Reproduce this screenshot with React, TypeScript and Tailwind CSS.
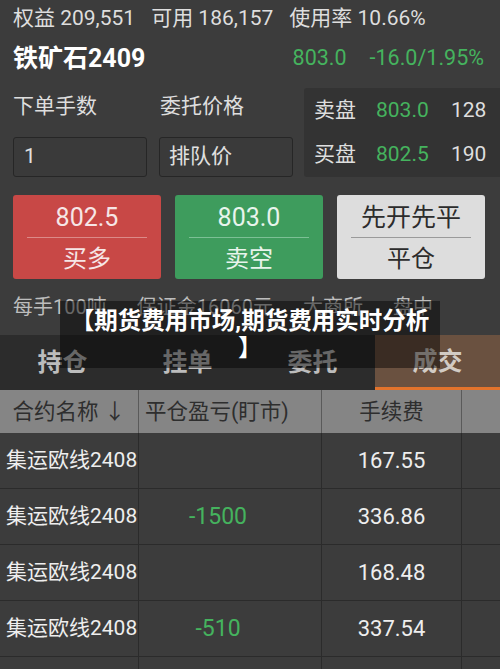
const rows = [
  { name: '集运欧线2408', pnl: '', fee: '167.55' },
  { name: '集运欧线2408', pnl: '-1500', fee: '336.86' },
  { name: '集运欧线2408', pnl: '', fee: '168.48' },
  { name: '集运欧线2408', pnl: '-510', fee: '337.54' },
  { name: '', pnl: '', fee: '' },
];

const tabs = ['持仓', '挂单', '委托', '成交'];

function TradeButton({ top, bottom, className, lineClass }: { top: string; bottom: string; className: string; lineClass: string }) {
  return (
    <div className={`flex flex-col rounded-[3px] h-[84px] ${className}`}>
      <div className="h-[42px] flex items-center justify-center text-[25px] leading-none pt-[2px]">{top}</div>
      <div className={`mx-[14px] h-px ${lineClass}`} />
      <div className="flex-1 flex items-center justify-center text-[24px] leading-none">{bottom}</div>
    </div>
  );
}

export default function App() {
  return (
    <div
      className="relative w-[500px] h-[669px] overflow-hidden bg-[#3c3c3c] text-[#dedede]"
      style={{ fontFamily: 'Roboto, "Noto Sans CJK SC", sans-serif' }}
    >
      {/* 账户概况 */}
      <div className="h-[36px] px-[13px] flex items-center gap-[16px] text-[21px] leading-none whitespace-nowrap">
        <span>权益 209,551</span>
        <span>可用 186,157</span>
        <span>使用率 10.66%</span>
      </div>
      <div className="h-[44px] px-[13px] flex items-center whitespace-nowrap">
        <span className="text-[25px] font-bold text-white leading-none">铁矿石2409</span>
        <span className="ml-auto text-[21.5px] text-[#45b35e] leading-none">803.0</span>
        <span className="ml-[23px] mr-[3px] text-[21.5px] text-[#45b35e] leading-none">-16.0/1.95%</span>
      </div>

      {/* 下单 + 盘口 */}
      <div className="mt-[8px] flex">
        <div className="flex-1 pl-[13px]">
          <div className="h-[37px] flex items-center text-[21px] leading-none">
            <span className="w-[147px]">下单手数</span>
            <span>委托价格</span>
          </div>
          <div className="mt-[12px] flex gap-[12px]">
            <div className="w-[134px] h-[40px] rounded-[3px] border border-[#262626] bg-[#3a3a3a] flex items-center pl-[10px] text-[21px] text-[#e0e0e0]">1</div>
            <div className="w-[134px] h-[40px] rounded-[3px] border border-[#262626] bg-[#3a3a3a] flex items-center pl-[9px] text-[21px] text-[#e0e0e0]">排队价</div>
          </div>
        </div>
        <div className="w-[196px] h-[89px] rounded-l-[3px] bg-[#333333] flex flex-col text-[21px] leading-none">
          <div className="h-[44px] flex items-center pl-[10px]">
            <span className="w-[62px]">卖盘</span>
            <span className="w-[75px] text-[#45b35e]">803.0</span>
            <span>128</span>
          </div>
          <div className="flex-1 flex items-center pl-[10px]">
            <span className="w-[62px]">买盘</span>
            <span className="w-[75px] text-[#45b35e]">802.5</span>
            <span>190</span>
          </div>
        </div>
      </div>

      {/* 操作按钮 */}
      <div className="mt-[18px] px-[13px] grid grid-cols-3 gap-[14px] pr-[15px]">
        <TradeButton top="802.5" bottom="买多" className="bg-[#c84846] text-[#f6e6e6]" lineClass="bg-[#dc8a88]" />
        <TradeButton top="803.0" bottom="卖空" className="bg-[#3e9c5d] text-[#e8f4ec]" lineClass="bg-[#7cc095]" />
        <TradeButton top="先开先平" bottom="平仓" className="bg-[#dddddd] text-[#2c2c2c]" lineClass="bg-[#9a9a9a]" />
      </div>

      {/* 合约信息 */}
      <div className="h-[56px] px-[13px] flex items-center gap-[30px] text-[20px] text-[#bdbdbd] leading-none whitespace-nowrap">
        <span>每手100吨</span>
        <span>保证金16060元</span>
        <span>大商所</span>
        <span>盘中</span>
      </div>

      {/* 标签 */}
      <div className="h-[55px] bg-[#2c2c2c] grid grid-cols-4">
        {tabs.map((t) => (
          <div
            key={t}
            className={`flex items-center justify-center text-[25px] font-bold leading-none ${
              t === '成交' ? 'bg-[#6a5140] text-[#d2cbc4] border-b-[3px] border-[#e2732c]' : 'text-[#bcbcbc]'
            }`}
          >
            {t}
          </div>
        ))}
      </div>

      {/* 成交表 */}
      <div className="h-[43px] bg-[#858585] flex text-[21.5px] text-[#2e2e2e] leading-none whitespace-nowrap">
        <div className="w-[139px] flex items-center justify-center border-r border-[#5a5a5a]">合约名称 ↓</div>
        <div className="w-[183px] flex items-center pl-[6px] border-r border-[#5a5a5a]">平仓盈亏(盯市)</div>
        <div className="w-[140px] flex items-center justify-center border-r border-[#5a5a5a]">手续费</div>
        <div className="flex-1" />
      </div>
      {rows.map((r, i) => (
        <div key={i} className="h-[56px] flex border-b border-[#2b2b2b] leading-none whitespace-nowrap">
          <div className="w-[139px] flex items-center pl-[6px] text-[21px] text-[#eeeeee] border-r border-[#2b2b2b]">{r.name}</div>
          <div className="w-[183px] flex items-center justify-center pr-[24px] text-[23px] text-[#45b35e] border-r border-[#2b2b2b]">{r.pnl}</div>
          <div className="w-[140px] flex items-center justify-center text-[22px] text-[#eeeeee] border-r border-[#2b2b2b]">{r.fee}</div>
          <div className="flex-1" />
        </div>
      ))}

      {/* 标题浮层 */}
      <div className="absolute left-[60px] top-[301px] w-[380px] h-[67px] bg-black/45 flex items-center justify-center">
        <p className="w-[362px] text-center text-[23.5px] font-bold text-white leading-[27px] [line-break:anywhere]">【期货费用市场,期货费用实时分析】</p>
      </div>
    </div>
  );
}
